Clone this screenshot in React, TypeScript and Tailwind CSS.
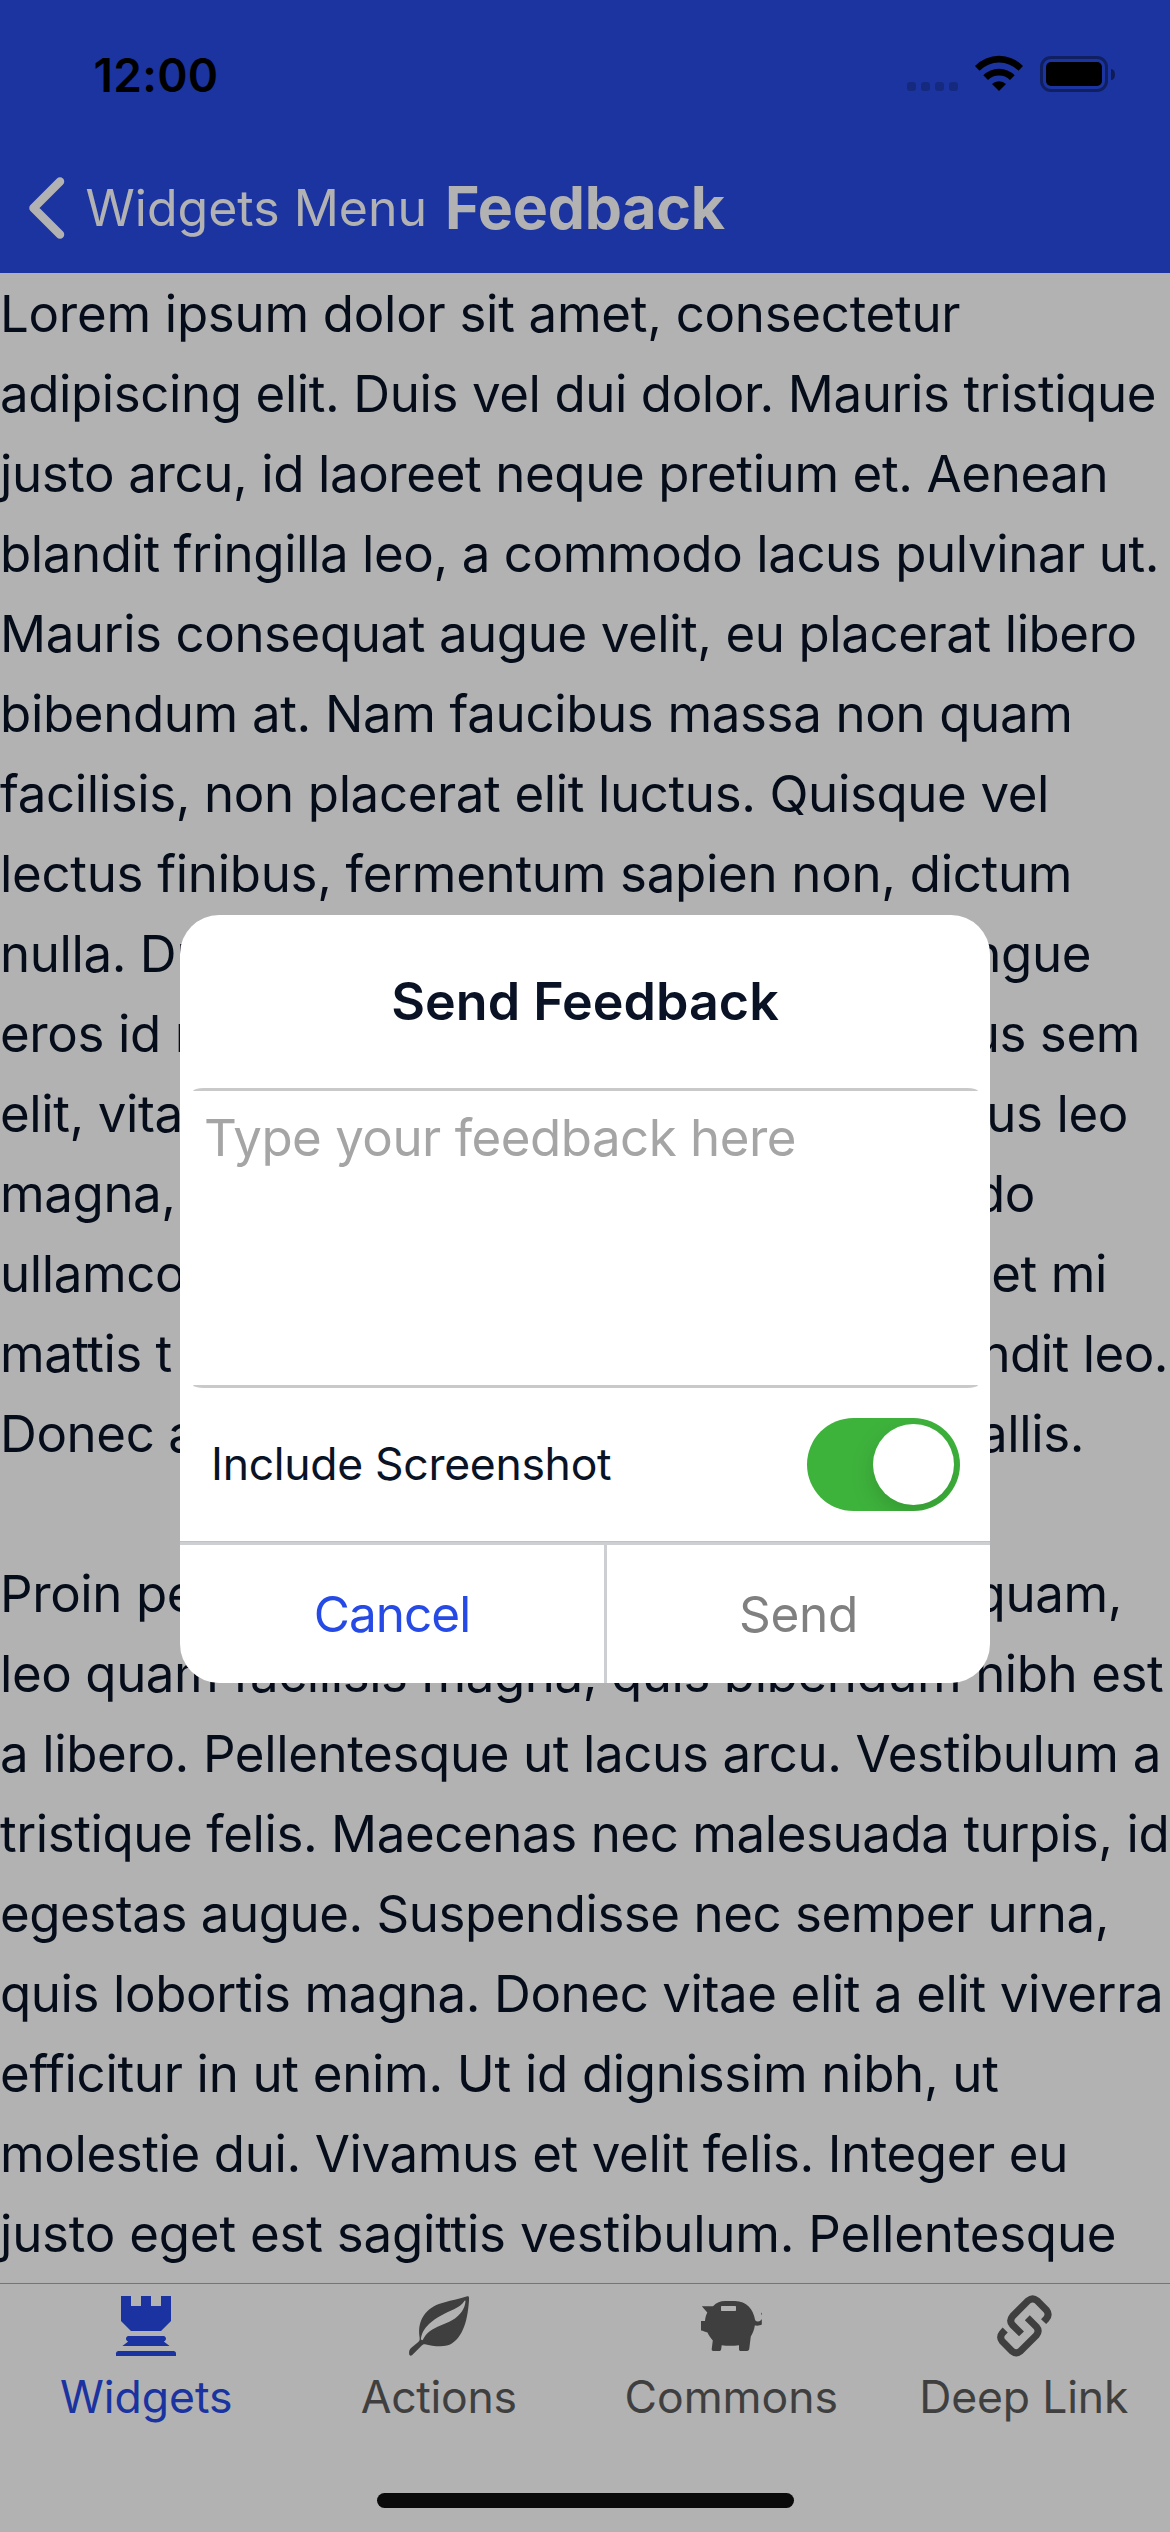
import type { ReactNode } from "react";
import { clsx } from "clsx";

type Line = { left: string; right?: string; className: string };

const LINES: Line[] = [
  { left: "Lorem ipsum dolor sit amet, consectetur", className: "tracking-[-0.28px]" },
  { left: "adipiscing elit. Duis vel dui dolor. Mauris tristique", className: "tracking-[-0.4px]" },
  { left: "justo arcu, id laoreet neque pretium et. Aenean", className: "tracking-[-0.39px]" },
  { left: "blandit fringilla leo, a commodo lacus pulvinar ut.", className: "tracking-[-0.42px]" },
  { left: "Mauris consequat augue velit, eu placerat libero", className: "tracking-[-0.42px]" },
  { left: "bibendum at. Nam faucibus massa non quam", className: "tracking-[-0.35px]" },
  { left: "facilisis, non placerat elit luctus. Quisque vel", className: "tracking-[-0.37px]" },
  { left: "lectus finibus, fermentum sapien non, dictum", className: "tracking-[-0.3px]" },
  { left: "nulla. Du", right: "ngue", className: "w-[1091px] tracking-[-0.4px]" },
  { left: "eros id n", right: "us sem", className: "w-[1140px] tracking-[-0.4px]" },
  { left: "elit, vita", right: "us leo", className: "w-[1128px] tracking-[-0.4px]" },
  { left: "magna,", right: "do", className: "w-[1035px] tracking-[-0.4px]" },
  { left: "ullamco", right: "et mi", className: "w-[1107px] tracking-[-0.4px]" },
  { left: "mattis t", right: "ndit leo.", className: "w-[1168px] tracking-[-0.5px]" },
  { left: "Donec a", right: "allis.", className: "w-[1084px] tracking-[-0.4px]" },
  { left: "\u00a0", className: "" },
  { left: "Proin pe", right: "quam,", className: "w-[1122px] tracking-[-0.4px]" },
  { left: "leo quam facilisis magna, quis bibendum nibh est", className: "tracking-[-0.42px]" },
  { left: "a libero. Pellentesque ut lacus arcu. Vestibulum a", className: "tracking-[-0.37px]" },
  { left: "tristique felis. Maecenas nec malesuada turpis, id", className: "tracking-[-0.42px]" },
  { left: "egestas augue. Suspendisse nec semper urna,", className: "tracking-[-0.46px]" },
  { left: "quis lobortis magna. Donec vitae elit a elit viverra", className: "tracking-[-0.4px]" },
  { left: "efficitur in ut enim. Ut id dignissim nibh, ut", className: "tracking-[-0.31px]" },
  { left: "molestie dui. Vivamus et velit felis. Integer eu", className: "tracking-[-0.39px]" },
  { left: "justo eget est sagittis vestibulum. Pellentesque", className: "tracking-[-0.21px]" },
];

function TabIcon({ children }: { children: ReactNode }) {
  return (
    <svg viewBox="0 0 60 60" className="size-[60px] overflow-visible" fill="currentColor">
      {children}
    </svg>
  );
}

const RookIcon = () => (
  <TabIcon>
    <path d="M5 0H15V10H25V0H35V10H45V0H55V25L45 35H15L5 25Z" />
    <path d="M12.5 40H47.5C50.8 40.6 50.8 44.6 47.8 45.4L53.6 50H6.4L12.2 45.4C9.2 44.6 9.2 40.6 12.5 40Z" />
    <path d="M0 60V57.5C0 56 1 55 2.5 55H57.5C59 55 60 56 60 57.5V60Z" />
  </TabIcon>
);

const LeafIcon = () => (
  <TabIcon>
    <path
      fillRule="evenodd"
      d="M59.6 .6C60.2 1.2 60 3 60 4.5C59.2 16 57.5 26 53.7 34C50 42 45 47.5 38 49.6C30.5 51.4 22 49.5 16 48.2C14.5 48 13.5 48.6 12.5 49.8L3 59.2C1.5 60.2 .1 59.6 .1 57.5C0 55.5 .4 53.4 2 52L9 46.2C10.6 45 10.9 43.5 10.6 41.5C9 31.5 11.3 23.5 16.4 17.3C21.5 11.2 28 8 35 6.4C43 4.4 51 2.6 57.5 .6C58.5 .3 59.2 .2 59.6 .6ZM55.6 4.8C53 9.2 49.5 11 45 13.2C36 17.2 27 21.5 20 28C14.8 33 12.3 38 11.9 43.6L13.6 44.2C15.5 40.4 17 38 20.4 35.4C27 30.6 36 28.4 43 24.3C51.5 19.5 55.8 12.5 56.5 5.2C56.5 4.6 56 4.4 55.6 4.8Z"
    />
  </TabIcon>
);

const PiggyIcon = () => (
  <TabIcon>
    <path
      fillRule="evenodd"
      d="M.8 10.2H12C15.5 6.6 19.5 5 24 5H34C45.5 5 52.5 13.5 54 23.6C54.3 25.2 55.8 25.8 57.2 25.5C58.9 25.2 59.8 24.4 60.8 23V28.6C59.2 29.8 56.5 29.8 53.8 29.6C53.3 33.5 51.8 37.5 49.8 40.6L48.3 52.5C48.1 54 47.5 55 46 55H40C38.6 55 38 54.4 38 53V49.3C32 50 26.5 50 20.7 49.3L20.2 53C20 54.4 19.3 55 18 55H12.5C11.2 55 10.5 54.2 10.7 53L11.8 44.4C9.6 42 7.6 39.4 6.5 36.6C4.6 36 2 34.9 0 34.6V25H4C4.2 22 5 19 6.3 16.5ZM21 10C20.3 10 20 10.3 20 11V14C20 14.7 20.3 15 21 15H34C34.7 15 35 14.7 35 14V11C35 10.3 34.7 10 34 10Z"
    />
    <path d="M60.8 16.4V19.6L60 17.6Z" />
  </TabIcon>
);

const LinkIcon = () => (
  <TabIcon>
    <g fill="none" stroke="currentColor" strokeWidth="7">
      <path d="M49.6 25.6L52.4 22.6Q55.7 18.5 52.6 14.4L43 4.6Q38.6 1 34.2 4.6L18.6 20.2Q14.9 24.6 18.4 28.8L27.5 37.9" />
      <path d="M11.2 34L8.4 37Q5.1 41.1 8.2 45.2L17.8 55Q22.2 58.6 26.6 55L42.2 39.4Q45.9 35 42.4 30.8L33.3 21.7" />
    </g>
  </TabIcon>
);

const TABS = [
  { label: "Widgets", icon: <RookIcon />, className: "text-[#264ae5]" },
  { label: "Actions", icon: <LeafIcon />, className: "tracking-[-0.3px] text-[#5b5b5b]" },
  { label: "Commons", icon: <PiggyIcon />, className: "text-[#5b5b5b]" },
  { label: "Deep Link", icon: <LinkIcon />, className: "tracking-[-0.15px] text-[#5b5b5b]" },
];

function StatusBar() {
  return (
    <div className="flex h-[142px] items-center justify-between pt-[5px] pr-[55px] pl-[93.5px] text-black">
      <span className="pt-[2px] text-[46px] leading-[46px] font-semibold tracking-[0.3px]">12:00</span>
      <div className="flex items-end">
        <div className="mb-px flex gap-[5px]">
          {[0, 1, 2, 3].map((dot) => (
            <span key={dot} className="size-[9px] rounded-[3px] bg-black/20" />
          ))}
        </div>
        <svg viewBox="0 0 48 36" className="mb-px ml-[17px] h-[36px] w-[48px]">
          <path d="M0 11A33.5 33.5 0 0 1 48 11L43.5 15.7A27.5 27.5 0 0 0 4.5 15.7Z" />
          <path d="M8.3 20.2A22.2 22.2 0 0 1 39.7 20.2L35 25A15.8 15.8 0 0 0 13 25Z" />
          <path d="M17 29A10 10 0 0 1 31 29L24 36Z" />
        </svg>
        <div className="ml-[17px] h-[36px] w-[68px] rounded-[11px] border-[3px] border-black/40 p-[3px]">
          <div className="h-full rounded-[5px] bg-black" />
        </div>
        <span className="mb-[12px] ml-[3px] h-[11px] w-[4px] rounded-r-[4px_6px] bg-black/45" />
      </div>
    </div>
  );
}

function NavBar() {
  return (
    <div className="flex h-[131px] items-center pl-[29px] whitespace-nowrap text-white">
      <svg
        viewBox="0 0 36 62"
        className="h-[62px] w-[36px]"
        fill="none"
        stroke="currentColor"
        strokeWidth="8.5"
        strokeLinecap="round"
        strokeLinejoin="round"
      >
        <path d="M31 4.5L4.5 31L31 57.5" />
      </svg>
      <span className="ml-[20.5px] text-[50px] leading-[60px]">Widgets Menu</span>
      <h1 className="ml-[18px] text-[59px] leading-[70px] font-bold tracking-[-0.2px]">Feedback</h1>
    </div>
  );
}

function FeedbackDialog() {
  return (
    <section className="flex h-[768px] w-[810px] flex-col overflow-hidden rounded-[39px] bg-white">
      <h2 className="flex h-[173px] shrink-0 items-center justify-center text-[52px] leading-[62px] font-semibold text-[#0a1326]">
        Send Feedback
      </h2>
      <div className="mr-[12px] ml-[12.5px] h-[3px] shrink-0 rounded-t-[11px_3px] bg-[#c9c9c9]" />
      <div className="h-[294px] shrink-0 pt-[17px] pl-[24px] text-[51px] leading-[60px] tracking-[-0.5px] text-[#a5a5a5]">
        Type your feedback here
      </div>
      <div className="mr-[12px] ml-[12.5px] h-[3px] shrink-0 rounded-b-[11px_3px] bg-[#c9c9c9]" />
      <div className="flex h-[153px] shrink-0 items-center justify-between pr-[30px] pl-[31px]">
        <span className="pb-[2px] text-[44.5px] leading-[54px] tracking-[-0.3px] text-[#0a1326]">
          Include Screenshot
        </span>
        <div className="flex h-[93px] w-[153px] items-center justify-end overflow-hidden rounded-full bg-[#3eb33c] pr-[6px]">
          <div className="size-[81px] rounded-full bg-white shadow-[0_9px_24px_rgba(0,0,0,0.15)]" />
        </div>
      </div>
      <div className="h-[4px] shrink-0 border-t border-[#bfc0c3] bg-[#cecfd3]" />
      <div className="flex flex-1 text-[49.5px] leading-[60px]">
        <div className="flex w-[424px] items-center justify-center tracking-[-1px] text-[#264ae5]">Cancel</div>
        <div className="w-[3px] bg-[#cecfd3]" />
        <div className="flex flex-1 items-center justify-center tracking-[-0.3px] text-[#808080]">Send</div>
      </div>
    </section>
  );
}

export default function App() {
  return (
    <div className="relative flex h-[2532px] w-[1170px] flex-col overflow-hidden bg-white font-['Inter',sans-serif]">
      <header className="shrink-0 bg-[#274be5]">
        <StatusBar />
        <NavBar />
      </header>

      <main className="h-[2010px] shrink-0 overflow-hidden pt-[0.6px] text-[51px] leading-[80.02px] whitespace-nowrap text-[#0a1326]">
        {LINES.map((line, i) => (
          <div key={i} className={clsx("flex justify-between", line.className)}>
            <span>{line.left}</span>
            {line.right && <span>{line.right}</span>}
          </div>
        ))}
      </main>

      <nav className="grid flex-1 grid-cols-4 border-t border-[#a7a7a7] pt-[12px]">
        {TABS.map((tab) => (
          <div key={tab.label} className={clsx("flex flex-col items-center", tab.className)}>
            {tab.icon}
            <span className="mt-[14px] text-[44.5px] leading-[54px]">{tab.label}</span>
          </div>
        ))}
      </nav>

      <div className="absolute inset-0 flex items-start justify-center bg-black/30 pt-[915px]">
        <FeedbackDialog />
      </div>
      <div className="absolute bottom-[24px] left-[377px] h-[15px] w-[417px] rounded-full bg-[#0a0a0a]" />
    </div>
  );
}
